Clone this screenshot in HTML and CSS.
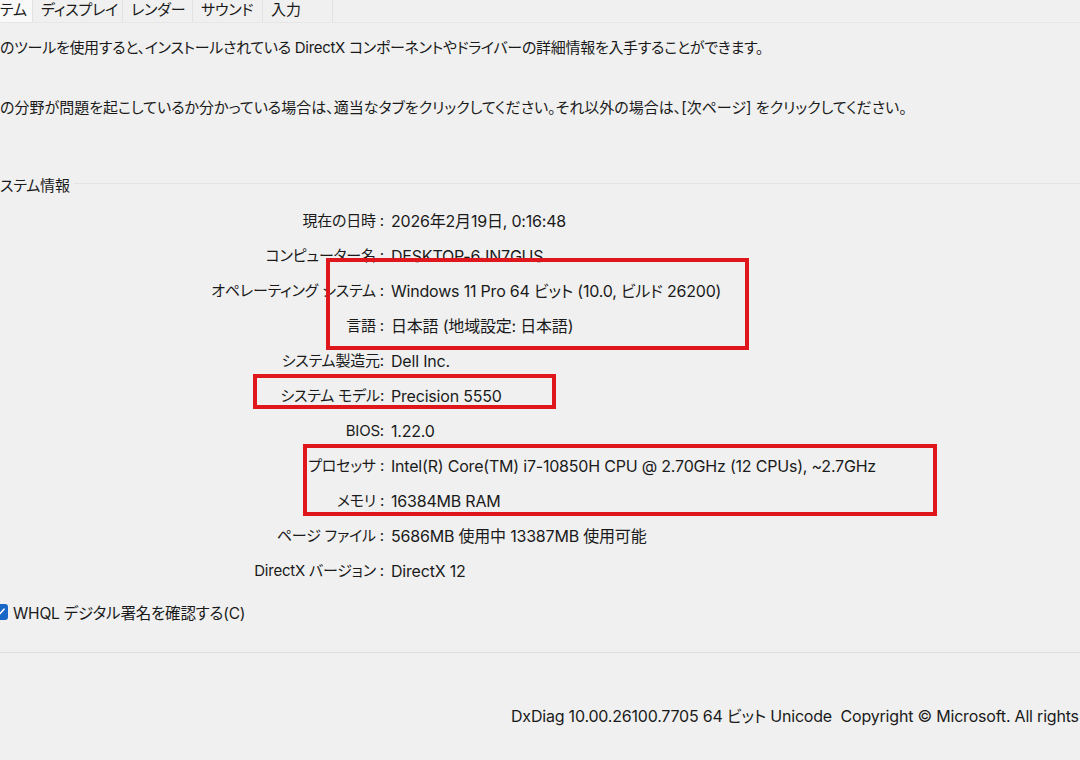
FILE: index.html
```html
<!DOCTYPE html>
<html lang="ja">
<head>
<meta charset="utf-8">
<title>DirectX 診断ツール</title>
<link rel="stylesheet" href="styles.css">
</head>
<body>
<div class="page">
  <div class="tabs">
    <div class="tab active">テム</div>
    <div class="tab">ディスプレイ</div>
    <div class="tab">レンダー</div>
    <div class="tab">サウンド</div>
    <div class="tab">入力</div>
  </div>

  <p class="intro first">のツールを使用すると、インストールされている DirectX コンポーネントやドライバーの詳細情報を入手することができます。</p>
  <p class="intro second">の分野が問題を起こしているか分かっている場合は、適当なタブをクリックしてください。それ以外の場合は、[次ページ] をクリックしてください。</p>

  <div class="group-head"><span class="group-title">ステム情報</span><span class="group-line"></span></div>

  <div class="info">
    <div class="lbl">現在の日時 :</div><div class="val">2026年2月19日, 0:16:48</div>
    <div class="lbl">コンピューター名 :</div><div class="val">DESKTOP-6JN7GUS</div>
    <div class="lbl">オペレーティング システム :</div><div class="val">Windows 11 Pro 64 ビット (10.0, ビルド 26200)</div>
    <div class="lbl">言語 :</div><div class="val">日本語 (地域設定: 日本語)</div>
    <div class="lbl">システム製造元:</div><div class="val">Dell Inc.</div>
    <div class="lbl">システム モデル:</div><div class="val">Precision 5550</div>
    <div class="lbl">BIOS:</div><div class="val">1.22.0</div>
    <div class="lbl">プロセッサ :</div><div class="val">Intel(R) Core(TM) i7-10850H CPU @ 2.70GHz (12 CPUs), ~2.7GHz</div>
    <div class="lbl">メモリ :</div><div class="val">16384MB RAM</div>
    <div class="lbl">ページ ファイル :</div><div class="val">5686MB 使用中 13387MB 使用可能</div>
    <div class="lbl">DirectX バージョン :</div><div class="val">DirectX 12</div>
  </div>

  <label class="check-row">
    <span class="checkbox"><svg viewBox="0 0 16 16" width="16" height="16"><path d="M4 8.3 L6.8 11 L12 5.2" fill="none" stroke="#fff" stroke-width="1.6" stroke-linecap="round" stroke-linejoin="round"/></svg></span>
    <span class="check-text">WHQL デジタル署名を確認する(C)</span>
  </label>

  <div class="divider"></div>

  <div class="footer">DxDiag 10.00.26100.7705 64 ビット Unicode  Copyright © Microsoft. All rights reserved.</div>

  <div class="mark mark-os"></div>
  <div class="mark mark-model"></div>
  <div class="mark mark-cpu"></div>
</div>
</body>
</html>
```

FILE: styles.css
```css
html, body {
  margin: 0;
  padding: 0;
  background: #f0f0f0;
}

body {
  width: 1080px;
  height: 760px;
  overflow: hidden;
  font-family: Inter, "Noto Sans CJK JP", sans-serif;
  font-feature-settings: "palt";
  font-size: 15px;
  letter-spacing: -0.2px;
  color: #1a1a1a;
}

.page {
  position: relative;
  width: 1080px;
  height: 760px;
  overflow: hidden;
}

.tabs {
  display: flex;
  height: 22px;
  border-bottom: 1px solid #e6e6e6;
}

.tab {
  box-sizing: border-box;
  min-width: 70px;
  padding: 0 4px 0 8px;
  line-height: 20px;
  border-right: 1px solid #e2e2e2;
  background: #f0f0f0;
  white-space: nowrap;
}

.tab.active {
  min-width: 33px;
  padding: 0 3px 0 0;
  background: #f9f9f9;
}

.intro {
  margin: 0;
  white-space: nowrap;
  line-height: 20px;
}

.intro.first {
  margin-top: 15px;
  letter-spacing: -0.3px;
}

.intro.second {
  margin-top: 40px;
  letter-spacing: 0;
}

.group-head {
  display: flex;
  align-items: center;
  margin-top: 56px;
  height: 20px;
}

.group-title {
  white-space: nowrap;
  padding-right: 4px;
}

.group-line {
  flex: 1;
  height: 1px;
  background: #e4e4e4;
  margin-top: -2px;
}

.info {
  display: grid;
  grid-template-columns: 384px 1fr;
  column-gap: 7px;
  grid-auto-rows: 35px;
  margin-top: 17px;
}

.lbl {
  text-align: right;
  line-height: 20px;
  white-space: nowrap;
}

.val {
  font-size: 16px;
  line-height: 20px;
  white-space: nowrap;
}

.check-row {
  display: flex;
  align-items: center;
  gap: 5px;
  margin-top: 6px;
  height: 20px;
}

.check-text {
  font-size: 15.5px;
}

.checkbox {
  display: block;
  width: 16px;
  height: 16px;
  margin-left: -8px;
  border-radius: 3px;
  background: #1866c5;
}

.checkbox svg {
  display: block;
}

.divider {
  height: 1px;
  background: #dedede;
  margin-top: 30px;
}

.footer {
  margin-top: 53px;
  padding-left: 511px;
  font-size: 16px;
  white-space: pre;
  line-height: 20px;
}

.mark {
  position: absolute;
  box-sizing: border-box;
  border: 4px solid #e0161d;
}

.mark-os {
  left: 326px;
  top: 258px;
  width: 423px;
  height: 92px;
}

.mark-model {
  left: 253px;
  top: 374px;
  width: 303px;
  height: 35px;
}

.mark-cpu {
  left: 303px;
  top: 444px;
  width: 634px;
  height: 72px;
}
```
